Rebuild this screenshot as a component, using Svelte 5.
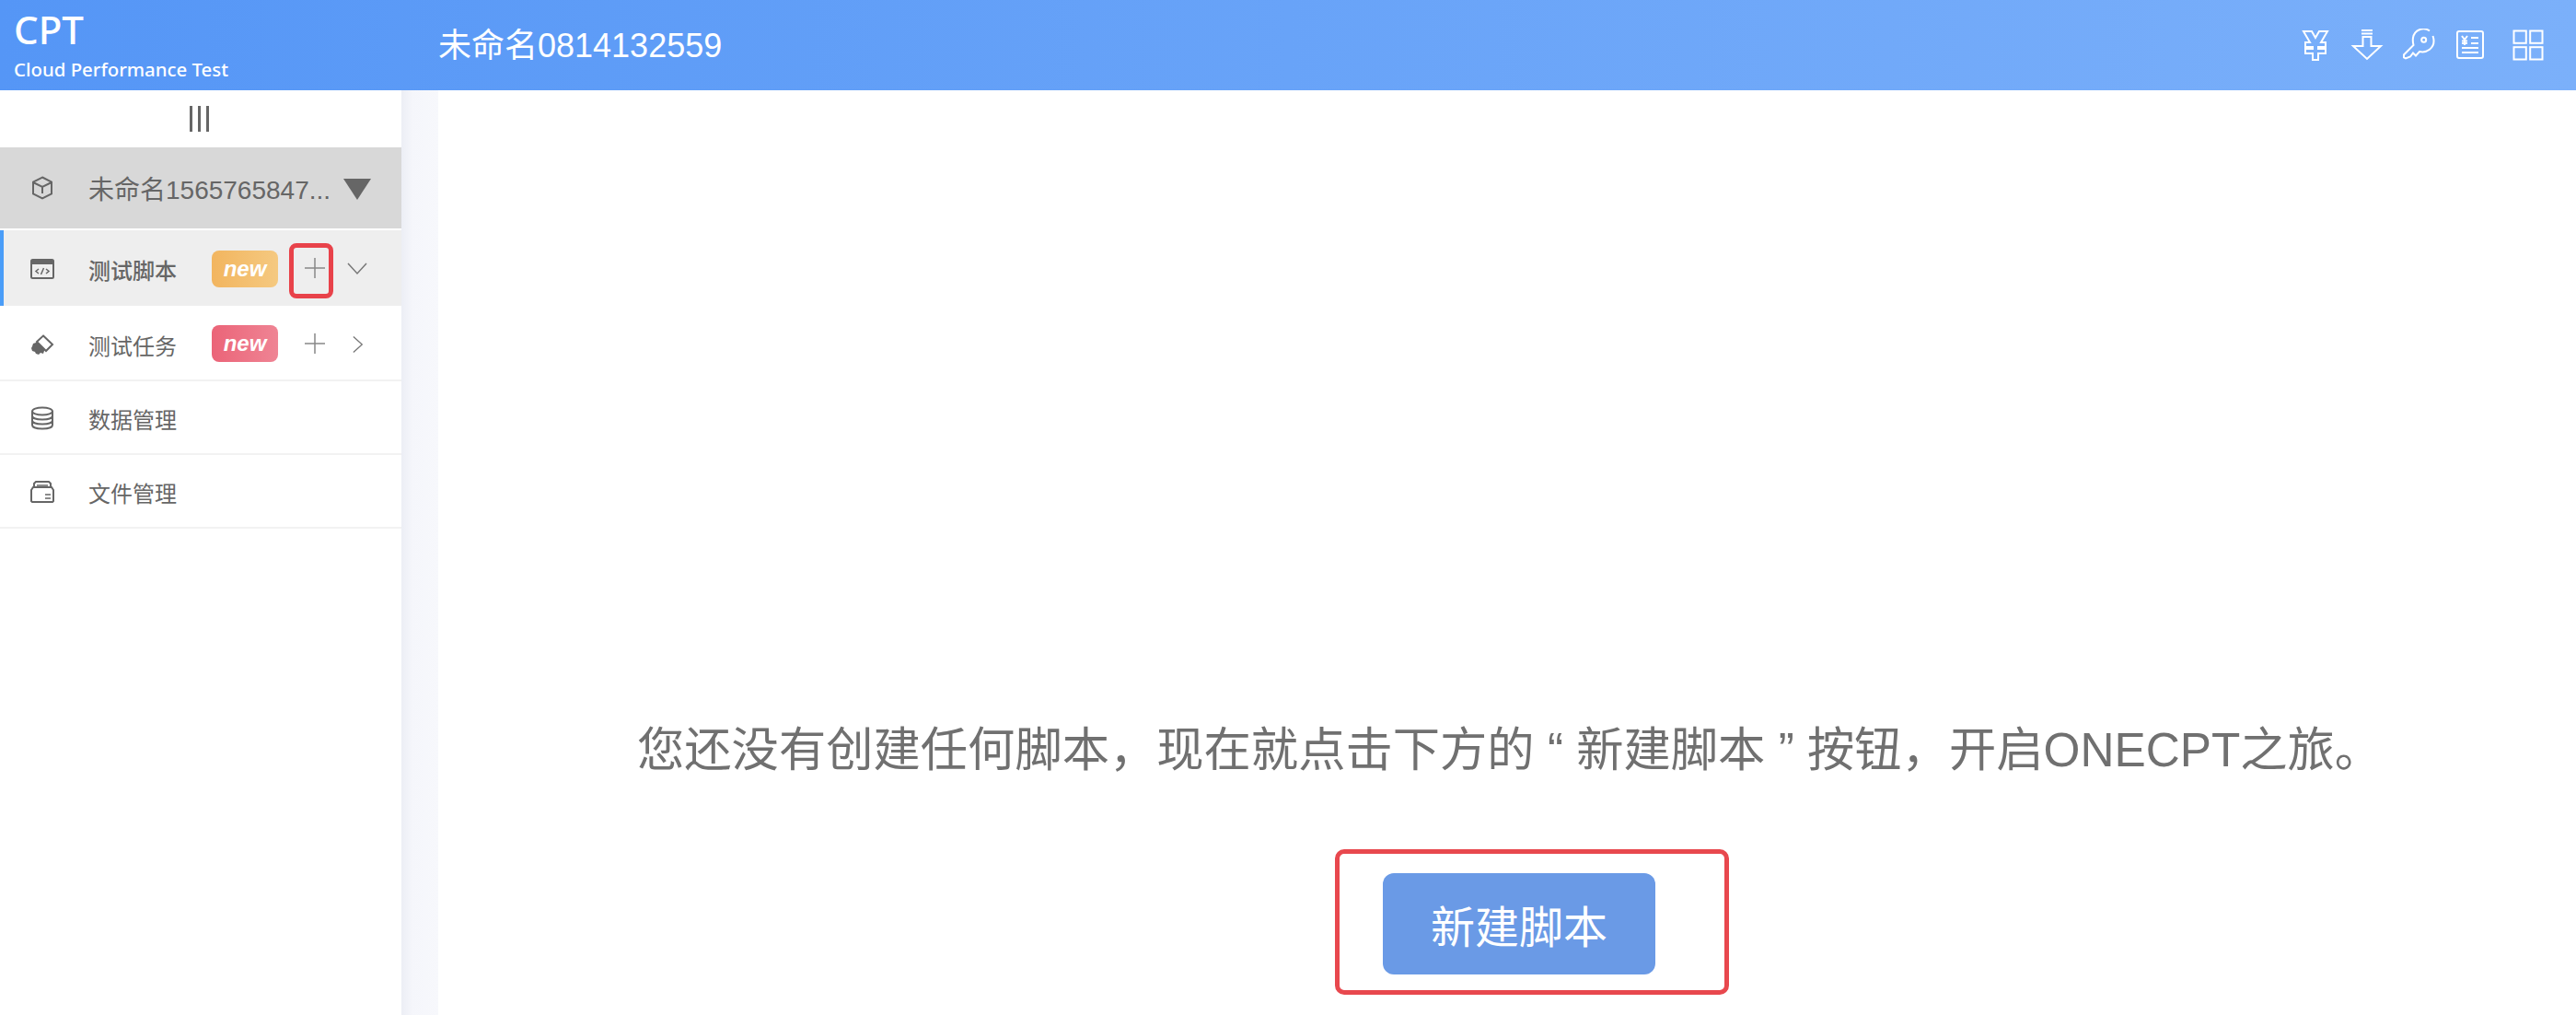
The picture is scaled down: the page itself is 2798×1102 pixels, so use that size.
<script>
    const menu = [
        { name: "测试任务", icon: "task", badge: "red", chevron: "right" },
        { name: "数据管理", icon: "data" },
        { name: "文件管理", icon: "file" },
    ];
</script>

<div class="page">
    <header class="top">
        <div class="logo">
            <div class="logo-name">CPT</div>
            <div class="logo-sub">Cloud Performance Test</div>
        </div>
        <div class="title">未命名0814132559</div>
        <div class="tools">
            <svg viewBox="0 0 36 36" class="tool">
                <path d="M5 3h9l4 7 4-7h9l-7 12h5v5h-8v2h8v5h-8v7h-6v-7H7v-5h8v-2H7v-5h5z" />
            </svg>
            <svg viewBox="0 0 36 36" class="tool">
                <path d="M12 2h12M12 5.500h12M13.500 9h9v10H33L18 33 3 19h10.500z" />
            </svg>
            <svg viewBox="0 0 36 36" class="tool">
                <path d="M30 2.500A11.500 11.500 0 0 0 12 10c-.5 3 0 6 .5 8L2 28.500v3l2 1 5-2 3-4 3 3 4-4.500c8 2 16-4 15.500-12 0-2-.5-3.500-1-5" />
                <circle cx="23.700" cy="12.300" r="2.500" />
            </svg>
            <svg viewBox="0 0 36 36" class="tool">
                <rect x="4" y="3" width="28" height="29" rx="2" />
                <path d="M9 8l3 4 3-4M12 12v6M9 13.500h6M9 16h6M19 10h8M19 16h8M9 21h18M9 26h18" />
            </svg>
            <svg viewBox="0 0 36 36" class="tool grid">
                <rect x="2.500" y="2.500" width="13.300" height="13.300" />
                <rect x="20.200" y="2.500" width="13.300" height="13.300" />
                <rect x="2.500" y="20.200" width="13.300" height="13.300" />
                <rect x="20.200" y="20.200" width="13.300" height="13.300" />
            </svg>
        </div>
    </header>

    <div class="body">
        <aside class="side">
            <div class="toggle"><span></span><span></span><span></span></div>

            <div class="project">
                <svg viewBox="0 0 26 26" class="ico">
                    <path d="M13 1.500l10 5v13l-10 5-10-5v-13z" />
                    <path d="M3 7l10 5 10-5M13 12v7" />
                </svg>
                <span class="project-name">未命名1565765847...</span>
                <span class="caret"></span>
            </div>

            <div class="row active">
                <svg viewBox="0 0 26 26" class="ico">
                    <rect x="1" y="3" width="24" height="20" rx="1.500" />
                    <path d="M1 4h24v4H1z" class="solid" />
                    <path d="M9 13l-3 2.500L9 18M17 13l3 2.500-3 2.500M14.500 12l-3 7" class="thin" />
                </svg>
                <span class="label strong">测试脚本</span>
                <span class="badge orange">new</span>
                <span class="plus">
                    <svg viewBox="0 0 22 22"><path d="M11 0v22M0 11h22" /></svg>
                    <i class="mark"></i>
                </span>
                <svg viewBox="0 0 22 14" class="chev"><path d="M1 1l10 11L21 1" /></svg>
            </div>

            {#each menu as item}
                <div class="row">
                    {#if item.icon === "task"}
                        <svg viewBox="0 0 26 26" class="ico">
                            <path d="M9 8l3 1 1 4 3 2 1 3-2 2-1 3-3-1-2 2-3-1-1-2-3-1-1-3 1-2 1-3 3-1z" class="solid" />
                            <path d="M14 3.500l10 9.500-7 7L7 10z" class="cut" />
                        </svg>
                    {:else if item.icon === "data"}
                        <svg viewBox="0 0 26 26" class="ico">
                            <ellipse cx="13" cy="5.500" rx="11" ry="4" />
                            <path d="M2 5.500v15c0 2.500 5 4 11 4s11-1.500 11-4v-15M2 10.500c0 2.500 5 4 11 4s11-1.500 11-4M2 15.500c0 2.500 5 4 11 4s11-1.500 11-4" />
                        </svg>
                    {:else}
                        <svg viewBox="0 0 26 26" class="ico">
                            <path d="M4 8V4l2-2h14l2 2v4" />
                            <path d="M7 6h12" class="thin" />
                            <path d="M1 11l2-3h20l2 3v12l-1 1H2l-1-1z" />
                            <path d="M16 16h6M16 20h6" class="thin" />
                        </svg>
                    {/if}
                    <span class="label">{item.name}</span>
                    {#if item.badge}
                        <span class="badge red">new</span>
                        <span class="plus">
                            <svg viewBox="0 0 22 22"><path d="M11 0v22M0 11h22" /></svg>
                        </span>
                        <svg viewBox="0 0 14 22" class="chev right"><path d="M1 1l11 10L1 21" /></svg>
                    {/if}
                </div>
            {/each}
        </aside>

        <div class="gutter"></div>

        <main class="content">
            <p class="hint">您还没有创建任何脚本，现在就点击下方的 “ 新建脚本 ” 按钮，开启ONECPT之旅。</p>
            <div class="btn-mark">
                <button class="create">新建脚本</button>
            </div>
        </main>
    </div>
</div>

<style>
    :global(body) {
        margin: 0;
        background: #fff;
    }
    .page {
        width: 2798px;
        height: 1102px;
        display: flex;
        flex-direction: column;
        overflow: hidden;
        font-family: "Liberation Sans", "Noto Sans CJK SC", sans-serif;
        color: #666;
    }
    .top {
        height: 98px;
        flex: none;
        display: flex;
        align-items: center;
        background: linear-gradient(90deg, #5596f6, #7bb0fa);
        color: #fff;
    }
    .logo {
        width: 476px;
        flex: none;
        box-sizing: border-box;
        padding-left: 15px;
        align-self: stretch;
        display: flex;
        flex-direction: column;
    }
    .logo-name {
        font-family: "Noto Sans", sans-serif;
        font-size: 42px;
        font-weight: 500;
        line-height: 44px;
        margin-top: 10px;
    }
    .logo-sub {
        font-family: "Noto Sans", sans-serif;
        font-size: 20.400px;
        font-weight: 500;
        line-height: 26px;
        margin-top: 8px;
    }
    .title {
        font-size: 36px;
        flex: 1;
        padding-bottom: 6px;
    }
    .tools {
        display: flex;
        gap: 20px;
        padding-right: 34px;
    }
    .tool {
        width: 36px;
        height: 36px;
        fill: none;
        stroke: #fff;
        stroke-width: 2;
    }
    .grid {
        margin-left: 7px;
    }
    .body {
        flex: 1;
        display: flex;
        min-height: 0;
    }
    .side {
        width: 436px;
        flex: none;
        background: #fff;
    }
    .toggle {
        height: 62px;
        display: flex;
        justify-content: center;
        align-items: center;
        gap: 6px;
        padding-right: 4px;
    }
    .toggle span {
        width: 3px;
        height: 28px;
        background: #666;
    }
    .project {
        height: 88px;
        display: flex;
        align-items: center;
        padding-left: 33px;
        background: #d8d8d8;
        font-size: 28px;
    }
    .project-name {
        margin-left: 37px;
        width: 277px;
        white-space: nowrap;
    }
    .caret {
        margin-top: 3px;
        border-style: solid;
        border-width: 23px 15px 0;
        border-color: #666 transparent transparent;
    }
    .ico {
        width: 26px;
        height: 26px;
        flex: none;
        fill: none;
        stroke: #666;
        stroke-width: 2;
    }
    .ico .solid {
        fill: #666;
        stroke: none;
    }
    .ico .cut {
        fill: #fff;
        stroke: #666;
    }
    .ico .thin {
        stroke-width: 1.500;
    }
    .row {
        height: 78px;
        position: relative;
        display: flex;
        align-items: center;
        padding-left: 33px;
        border-bottom: 2px solid #f2f2f2;
        font-size: 24px;
    }
    .row .ico,
    .row .label {
        margin-top: 2px;
    }
    .row.active {
        height: 82px;
        margin-top: 2px;
        margin-bottom: 2px;
        background: #eeeeee;
        border-bottom: none;
    }
    .row.active::before {
        content: "";
        position: absolute;
        left: 0;
        top: 0;
        bottom: 0;
        width: 4px;
        background: #4a9df8;
    }
    .label {
        margin-left: 37px;
        width: 97px;
    }
    .strong {
        font-weight: 500;
    }
    .badge {
        margin-left: 37px;
        width: 72px;
        height: 40px;
        border-radius: 8px;
        color: #fff;
        font-size: 24px;
        font-style: italic;
        font-weight: 700;
        line-height: 39px;
        text-align: center;
    }
    .orange {
        margin-top: 2px;
        background: linear-gradient(90deg, #f2b55f, #f5c980);
    }
    .red {
        background: linear-gradient(90deg, #eb6478, #ef8494);
    }
    .plus {
        position: relative;
        margin-left: 29px;
        width: 22px;
        height: 22px;
        flex: none;
    }
    .plus svg {
        display: block;
        width: 22px;
        height: 22px;
        fill: none;
        stroke: #888;
        stroke-width: 1.500;
    }
    .mark {
        position: absolute;
        left: -17px;
        top: -16px;
        width: 48px;
        height: 60px;
        box-sizing: border-box;
        border: 5px solid #e8424a;
        border-radius: 8px;
    }
    .chev {
        margin-left: 24px;
        margin-top: 2px;
        width: 22px;
        height: 14px;
        fill: none;
        stroke: #777;
        stroke-width: 1.500;
    }
    .chev.right {
        margin-left: 30px;
        width: 12px;
        height: 20px;
    }
    .gutter {
        width: 40px;
        flex: none;
        background: linear-gradient(90deg, #eceef5, #f5f6fb 30%, #f7f8fc);
    }
    .content {
        flex: 1;
        padding-top: 681px;
        padding-left: 216px;
        min-width: 0;
    }
    .hint {
        margin: 0;
        font-size: 51.300px;
        line-height: 72px;
        white-space: nowrap;
        color: #707070;
    }
    .btn-mark {
        width: 428px;
        height: 158px;
        margin-left: 758px;
        margin-top: 71px;
        box-sizing: border-box;
        display: flex;
        align-items: center;
        border: 5px solid #e8484e;
        border-radius: 10px;
    }
    .create {
        width: 296px;
        height: 110px;
        margin-left: 47px;
        margin-top: 4px;
        border: none;
        border-radius: 12px;
        background: #6a9ae6;
        color: #fff;
        font-family: inherit;
        font-size: 48px;
        padding: 0;
    }
</style>
